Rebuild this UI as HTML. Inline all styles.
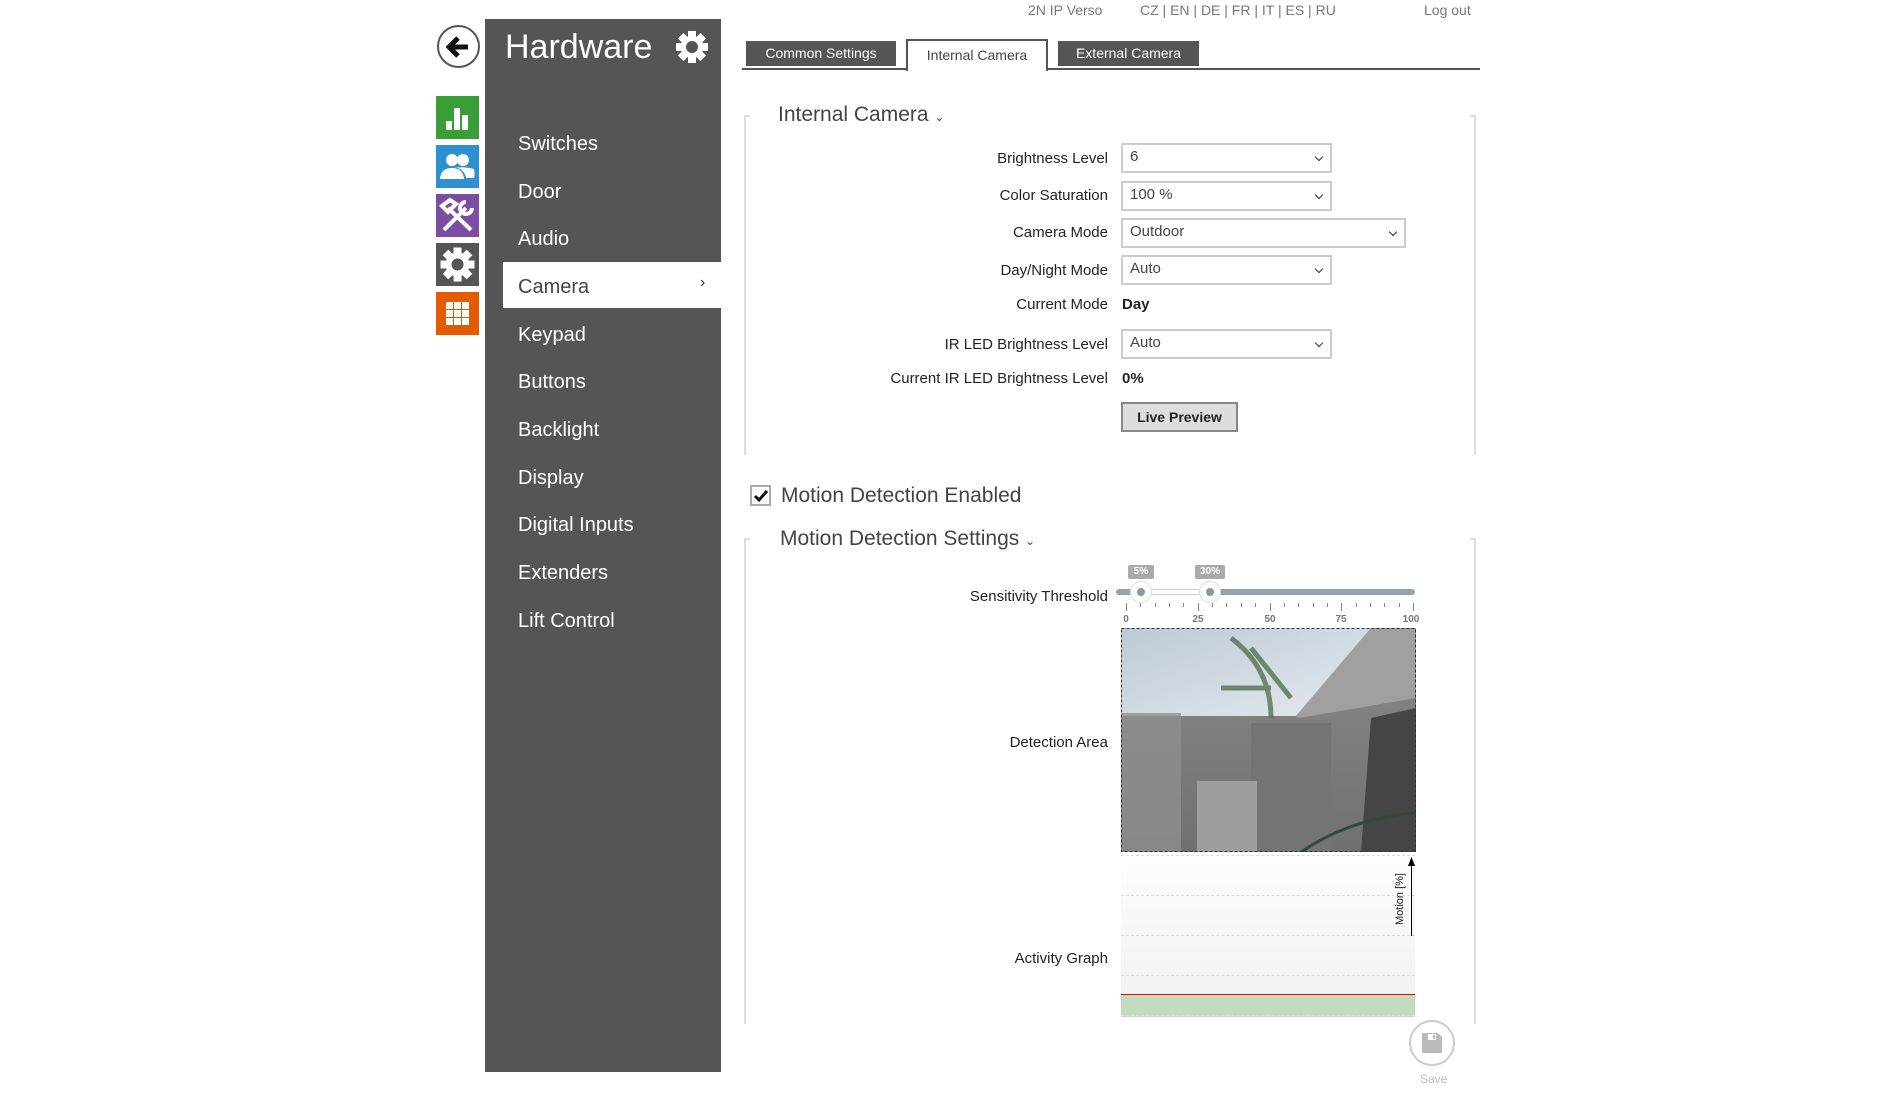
<!DOCTYPE html>
<html><head><meta charset="utf-8"><style>
*{margin:0;padding:0;box-sizing:border-box}
body{width:1880px;height:1096px;background:#fff;font-family:"Liberation Sans",sans-serif;position:relative;overflow:hidden;color:#222}
.a{position:absolute}
.ic{position:absolute;left:436px;width:43px;height:43px}
.side{left:485px;top:19px;width:236px;height:1053px;background:#555}
.mi{position:absolute;left:33px;font-size:20px;color:#fff;line-height:24px}
.lbl{position:absolute;right:772px;font-size:15px;color:#222;text-align:right;white-space:nowrap}
.sel{position:absolute;left:1121px;width:211px;height:30px;border:2px solid #ccc;font-size:15px;color:#444;padding:3px 7px;background:#fff}
.sel:after{content:"";position:absolute;right:8px;top:9px;width:5px;height:5px;border-right:1.5px solid #333;border-bottom:1.5px solid #333;transform:rotate(45deg)}
.tab{position:absolute;top:41px;height:25px;background:#555;color:#fff;font-size:14px;text-align:center;line-height:24px}
.top{position:absolute;top:2px;font-size:14px;color:#777}
.tk{position:absolute;top:603px;width:1px;background:#888}
.tl{position:absolute;top:614px;font-size:10px;color:#777;font-weight:bold;width:30px;text-align:center;margin-left:-15px}
.dl{position:absolute;left:1121px;width:294px;border-top:1px dashed #ddd}
</style></head><body>
<div class="a" style="left:437px;top:25px;width:43px;height:43px;border:2px solid #555;border-radius:50%"></div>
<svg class="a" style="left:446px;top:35px" width="26" height="24" viewBox="0 0 26 24"><path d="M12 3 L3 12 L12 21 M3 12 H22" stroke="#111" stroke-width="5" fill="none"/></svg>
<div class="ic" style="top:96px;background:#389e35"><svg width="43" height="43"><rect x="10" y="25" width="6" height="9" fill="#fff"/><rect x="18" y="12" width="6" height="22" fill="#fff"/><rect x="26" y="19" width="6" height="15" fill="#fff"/></svg></div>
<div class="ic" style="top:145px;background:#2e90d1"><svg width="43" height="43"><circle cx="16" cy="15" r="6" fill="#fff"/><circle cx="27" cy="15" r="6" fill="#fff"/><path d="M4 34 Q5 23 16 23 Q27 23 28 34Z M18 23 Q27 21 38 24 Q39 30 38 33 L30 33 Q29 26 22 23Z" fill="#fff"/></svg></div>
<div class="ic" style="top:194px;background:#7b4ea3"><svg width="43" height="43"><path d="M8 36 L30 14 M6 12 L14 6 L20 10 L12 18Z M12 14 L35 36 M30 8 a6 6 0 1 0 6 6" stroke="#fff" stroke-width="4" fill="none"/></svg></div>
<div class="ic" style="top:243px;background:#555"><svg width="43" height="43" viewBox="0 0 43 43"><g fill="#fff" transform="translate(21.5 21.5)"><circle r="12"/><rect x="-4" y="-17" width="8" height="34"/><rect x="-4" y="-17" width="8" height="34" transform="rotate(45)"/><rect x="-4" y="-17" width="8" height="34" transform="rotate(90)"/><rect x="-4" y="-17" width="8" height="34" transform="rotate(135)"/></g><circle cx="21.5" cy="21.5" r="6" fill="#555"/></svg></div>
<div class="ic" style="top:292px;background:#e35a00"><svg width="43" height="43"><g fill="#fff"><rect x="10" y="10" width="7" height="7"/><rect x="18" y="10" width="7" height="7"/><rect x="26" y="10" width="7" height="7"/><rect x="10" y="18" width="7" height="7"/><rect x="18" y="18" width="7" height="7"/><rect x="26" y="18" width="7" height="7"/><rect x="10" y="26" width="7" height="7"/><rect x="18" y="26" width="7" height="7"/><rect x="26" y="26" width="7" height="7"/></g></svg></div>
<div class="a side">
<div class="a" style="left:20px;top:9px;font-size:34px;color:#fff">Hardware</div>
<svg class="a" style="left:189px;top:10px" width="36" height="36" viewBox="0 0 36 36"><g fill="#fff" transform="translate(18 18)"><circle r="11"/><rect x="-4" y="-16" width="8" height="32"/><rect x="-4" y="-16" width="8" height="32" transform="rotate(45)"/><rect x="-4" y="-16" width="8" height="32" transform="rotate(90)"/><rect x="-4" y="-16" width="8" height="32" transform="rotate(135)"/></g><circle cx="18" cy="18" r="6" fill="#555"/></svg>
<div class="mi" style="top:113px">Switches</div>
<div class="mi" style="top:161px">Door</div>
<div class="mi" style="top:208px">Audio</div>
<div class="a" style="left:18px;top:243px;width:218px;height:46px;background:#fff"></div>
<div class="mi" style="top:256px;color:#444">Camera</div>
<div class="a" style="left:215px;top:255px;font-size:16px;color:#333">›</div>
<div class="mi" style="top:304px">Keypad</div>
<div class="mi" style="top:351px">Buttons</div>
<div class="mi" style="top:399px">Backlight</div>
<div class="mi" style="top:447px">Display</div>
<div class="mi" style="top:494px">Digital Inputs</div>
<div class="mi" style="top:542px">Extenders</div>
<div class="mi" style="top:590px">Lift Control</div>
</div>
<div class="top" style="left:1028px">2N IP Verso</div>
<div class="top" style="left:1140px">CZ | EN | DE | FR | IT | ES | RU</div>
<div class="top" style="left:1424px">Log out</div>
<div class="a" style="left:742px;top:68px;width:738px;height:2px;background:#555"></div>
<div class="tab" style="left:746px;width:150px">Common Settings</div>
<div class="a" style="left:906px;top:39px;width:142px;height:32px;background:#fff;border:2px solid #555;border-bottom:none;font-size:14px;color:#444;text-align:center;line-height:28px">Internal Camera</div>
<div class="tab" style="left:1058px;width:141px">External Camera</div>
<div class="a" style="left:744px;top:115px;width:6px;height:340px;border-left:2px solid #ddd;border-top:2px solid #ddd"></div>
<div class="a" style="left:1470px;top:115px;width:6px;height:340px;border-right:2px solid #ddd;border-top:2px solid #ddd"></div>
<div class="a" style="left:778px;top:103px;font-size:21px;color:#444">Internal Camera <span style="font-size:12px">⌄</span></div>
<div class="lbl" style="top:150px">Brightness Level</div><div class="sel" style="top:143px">6</div>
<div class="lbl" style="top:187px">Color Saturation</div><div class="sel" style="top:181px">100 %</div>
<div class="lbl" style="top:224px">Camera Mode</div><div class="sel" style="top:218px;width:285px">Outdoor</div>
<div class="lbl" style="top:262px">Day/Night Mode</div><div class="sel" style="top:255px">Auto</div>
<div class="lbl" style="top:296px">Current Mode</div><div class="a" style="left:1122px;top:296px;font-size:15px;font-weight:bold">Day</div>
<div class="lbl" style="top:336px">IR LED Brightness Level</div><div class="sel" style="top:329px">Auto</div>
<div class="lbl" style="top:370px">Current IR LED Brightness Level</div><div class="a" style="left:1122px;top:370px;font-size:15px;font-weight:bold">0%</div>
<div class="a" style="left:1121px;top:402px;width:117px;height:30px;background:#ddd;border:2px solid #888;font-size:14px;font-weight:bold;text-align:center;line-height:26px">Live Preview</div>
<div class="a" style="left:750px;top:485px;width:21px;height:21px;border:2px solid #aaa"></div>
<svg class="a" style="left:752px;top:487px" width="18" height="18"><path d="M3 9 L7 13 L15 4" stroke="#111" stroke-width="3" fill="none"/></svg>
<div class="a" style="left:781px;top:484px;font-size:21px;color:#444">Motion Detection Enabled</div>
<div class="a" style="left:744px;top:538px;width:6px;height:486px;border-left:2px solid #ddd;border-top:2px solid #ddd"></div>
<div class="a" style="left:1470px;top:538px;width:6px;height:486px;border-right:2px solid #ddd;border-top:2px solid #ddd"></div>
<div class="a" style="left:780px;top:527px;font-size:21px;color:#444">Motion Detection Settings <span style="font-size:12px">⌄</span></div>
<div class="lbl" style="top:588px">Sensitivity Threshold</div>
<div class="lbl" style="top:734px">Detection Area</div>
<div class="lbl" style="top:950px">Activity Graph</div>
<div class="a" style="left:1116px;top:589px;width:299px;height:6px;border-radius:3px;background:#98a2ab"></div>
<div class="a" style="left:1141px;top:589px;width:69px;height:6px;background:#fff;border:1px solid #ccc"></div>
<div class="a" style="left:1130px;top:581px;width:22px;height:22px;border-radius:50%;background:#fff;border:1px solid #ddd"></div>
<div class="a" style="left:1137px;top:588px;width:8px;height:8px;border-radius:50%;background:#8a96a0"></div>
<div class="a" style="left:1199px;top:581px;width:22px;height:22px;border-radius:50%;background:#fff;border:1px solid #ddd"></div>
<div class="a" style="left:1206px;top:588px;width:8px;height:8px;border-radius:50%;background:#8a96a0"></div>
<div class="a" style="left:1128px;top:565px;width:26px;height:14px;background:#aaa;color:#fff;font-size:10px;font-weight:bold;text-align:center;line-height:14px;border-radius:2px">5%</div>
<div class="a" style="left:1195px;top:565px;width:30px;height:14px;background:#aaa;color:#fff;font-size:10px;font-weight:bold;text-align:center;line-height:14px;border-radius:2px">30%</div>
<div class="tk" style="left:1126px;height:8px"></div><div class="tk" style="left:1140px;height:4px"></div><div class="tk" style="left:1155px;height:4px"></div><div class="tk" style="left:1169px;height:4px"></div><div class="tk" style="left:1183px;height:4px"></div><div class="tk" style="left:1198px;height:8px"></div><div class="tk" style="left:1212px;height:4px"></div><div class="tk" style="left:1226px;height:4px"></div><div class="tk" style="left:1241px;height:4px"></div><div class="tk" style="left:1255px;height:4px"></div><div class="tk" style="left:1270px;height:8px"></div><div class="tk" style="left:1284px;height:4px"></div><div class="tk" style="left:1298px;height:4px"></div><div class="tk" style="left:1313px;height:4px"></div><div class="tk" style="left:1327px;height:4px"></div><div class="tk" style="left:1341px;height:8px"></div><div class="tk" style="left:1356px;height:4px"></div><div class="tk" style="left:1370px;height:4px"></div><div class="tk" style="left:1384px;height:4px"></div><div class="tk" style="left:1399px;height:4px"></div><div class="tk" style="left:1413px;height:8px"></div>
<div class="tl" style="left:1126px">0</div><div class="tl" style="left:1198px">25</div><div class="tl" style="left:1270px">50</div><div class="tl" style="left:1341px">75</div><div class="tl" style="left:1411px">100</div>
<svg class="a" style="left:1121px;top:628px" width="295" height="224" viewBox="0 0 295 224">
<defs><linearGradient id="w" x1="0" y1="0" x2="0" y2="1"><stop offset="0" stop-color="#8a8a8a"/><stop offset="1" stop-color="#707070"/></linearGradient>
<linearGradient id="s" x1="0" y1="0" x2="1" y2="1"><stop offset="0" stop-color="#bccad4"/><stop offset="1" stop-color="#e4eaee"/></linearGradient></defs>
<rect width="295" height="224" fill="url(#w)"/>
<path d="M0 0 H250 L175 88 H0Z" fill="url(#s)"/>
<path d="M175 88 L250 0 H295 V70 L178 90Z" fill="#a0a0a0"/>
<rect x="0" y="85" width="60" height="139" fill="#8e8e8e" opacity=".8"/>
<rect x="130" y="95" width="80" height="129" fill="#747474"/>
<path d="M250 90 L295 80 V224 H240Z" fill="#454545"/>
<rect x="76" y="153" width="60" height="71" fill="#9e9e9e"/>
<path d="M110 10 Q150 40 150 90 M130 20 L170 70 M100 60 L150 60" stroke="#55704f" stroke-width="5" fill="none" opacity=".8"/>
<path d="M180 224 Q230 190 295 185" stroke="#2f4a3c" stroke-width="3" fill="none"/>
<rect x="0.5" y="0.5" width="294" height="223" fill="none" stroke="#333" stroke-dasharray="3 2"/>
</svg>
<div class="a" style="left:1121px;top:853px;width:294px;height:164px;background:linear-gradient(#fdfdfd,#f0f0f0)"></div>
<div class="dl" style="top:855px"></div><div class="dl" style="top:895px"></div><div class="dl" style="top:935px"></div><div class="dl" style="top:975px"></div>
<div class="a" style="left:1121px;top:994px;width:294px;height:23px;background:#c2dcc0;border-top:1px solid #e00"></div>
<div class="dl" style="top:1015px"></div>
<div class="a" style="left:1411px;top:862px;width:1px;height:74px;background:#000"></div>
<svg class="a" style="left:1407px;top:857px" width="9" height="10"><path d="M4.5 0 L8 9 H1Z" fill="#000"/></svg>
<div class="a" style="left:1370px;top:893px;width:60px;font-size:11px;transform:rotate(-90deg);text-align:center">Motion [%]</div>
<div class="a" style="left:1409px;top:1020px;width:46px;height:46px;border:2px solid #ccc;border-radius:50%"></div>
<svg class="a" style="left:1421px;top:1032px" width="22" height="22"><path d="M1 1 H17 L21 5 V21 H1Z" fill="#bbb"/><rect x="7" y="2" width="8" height="6" fill="#fff"/><rect x="12" y="3" width="2" height="4" fill="#bbb"/></svg>
<div class="a" style="left:1420px;top:1072px;font-size:12px;color:#bbb">Save</div>
</body></html>
